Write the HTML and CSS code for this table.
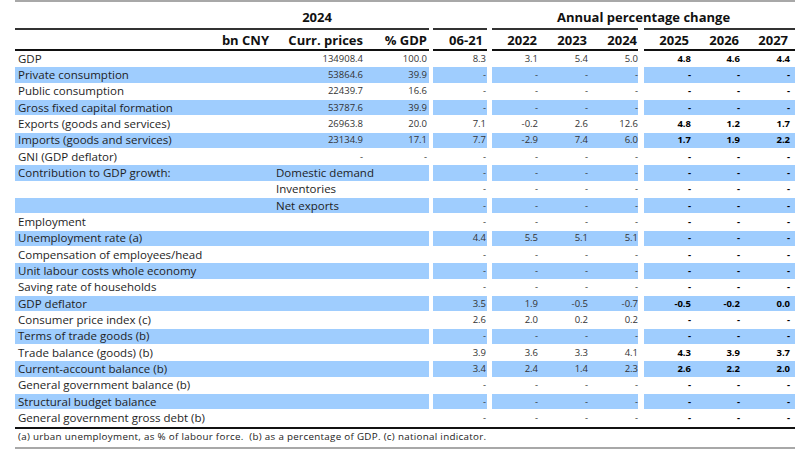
FILE: index.html
```html
<!DOCTYPE html>
<html lang="en">
<head>
<meta charset="utf-8">
<title>China – projections</title>
<link rel="stylesheet" href="styles.css">
</head>
<body>
<div class="frame">
<table class="t">
<colgroup>
<col class="w-lab"><col class="w-bn"><col class="w-cu"><col class="w-pg"><col class="w-g1"><col class="w-h"><col class="w-g2"><col class="w-y22"><col class="w-y23"><col class="w-y24"><col class="w-g3"><col class="w-y25"><col class="w-y26"><col class="w-y27">
</colgroup>
<thead>
<tr class="h1">
<th></th><th colspan="3" class="ctr">2024</th><th></th><th></th><th></th><th colspan="7" class="ctr">Annual percentage change</th>
</tr>
<tr class="rule r1">
<td colspan="4" class="k"></td><td></td><td class="k"></td><td></td><td colspan="3" class="k"></td><td></td><td colspan="3" class="k"></td>
</tr>
<tr class="h2">
<th></th><th class="hbn">bn CNY</th><th class="cu">Curr. prices</th><th class="pg">% GDP</th><th></th><th class="hh">06-21</th><th></th><th class="y22">2022</th><th class="y23">2023</th><th class="y24">2024</th><th></th><th class="y25">2025</th><th class="y26">2026</th><th class="y27">2027</th>
</tr>
<tr class="rule r2">
<td colspan="4" class="k"></td><td></td><td class="k"></td><td></td><td colspan="3" class="k"></td><td></td><td colspan="3" class="k"></td>
</tr>
</thead>
<tbody>
<tr><td colspan="2" class="lab">GDP</td><td class="cu">134908.4</td><td class="pg">100.0</td><td class="g"></td><td class="hh">8.3</td><td class="g"></td><td class="y22">3.1</td><td class="y23">5.4</td><td class="y24">5.0</td><td class="g"></td><td class="y25">4.8</td><td class="y26">4.6</td><td class="y27">4.4</td></tr>
<tr class="b"><td colspan="2" class="lab">Private consumption</td><td class="cu">53864.6</td><td class="pg">39.9</td><td class="g"></td><td class="hh">-</td><td class="g"></td><td class="y22">-</td><td class="y23">-</td><td class="y24">-</td><td class="g"></td><td class="y25">-</td><td class="y26">-</td><td class="y27">-</td></tr>
<tr><td colspan="2" class="lab">Public consumption</td><td class="cu">22439.7</td><td class="pg">16.6</td><td class="g"></td><td class="hh">-</td><td class="g"></td><td class="y22">-</td><td class="y23">-</td><td class="y24">-</td><td class="g"></td><td class="y25">-</td><td class="y26">-</td><td class="y27">-</td></tr>
<tr class="b"><td colspan="2" class="lab">Gross fixed capital formation</td><td class="cu">53787.6</td><td class="pg">39.9</td><td class="g"></td><td class="hh">-</td><td class="g"></td><td class="y22">-</td><td class="y23">-</td><td class="y24">-</td><td class="g"></td><td class="y25">-</td><td class="y26">-</td><td class="y27">-</td></tr>
<tr><td colspan="2" class="lab">Exports (goods and services)</td><td class="cu">26963.8</td><td class="pg">20.0</td><td class="g"></td><td class="hh">7.1</td><td class="g"></td><td class="y22">-0.2</td><td class="y23">2.6</td><td class="y24">12.6</td><td class="g"></td><td class="y25">4.8</td><td class="y26">1.2</td><td class="y27">1.7</td></tr>
<tr class="b"><td colspan="2" class="lab">Imports (goods and services)</td><td class="cu">23134.9</td><td class="pg">17.1</td><td class="g"></td><td class="hh">7.7</td><td class="g"></td><td class="y22">-2.9</td><td class="y23">7.4</td><td class="y24">6.0</td><td class="g"></td><td class="y25">1.7</td><td class="y26">1.9</td><td class="y27">2.2</td></tr>
<tr><td colspan="2" class="lab">GNI (GDP deflator)</td><td class="cu">-</td><td class="pg">-</td><td class="g"></td><td class="hh">-</td><td class="g"></td><td class="y22">-</td><td class="y23">-</td><td class="y24">-</td><td class="g"></td><td class="y25">-</td><td class="y26">-</td><td class="y27">-</td></tr>
<tr class="b"><td colspan="2" class="lab">Contribution to GDP growth:</td><td colspan="2" class="sub">Domestic demand</td><td class="g"></td><td class="hh">-</td><td class="g"></td><td class="y22">-</td><td class="y23">-</td><td class="y24">-</td><td class="g"></td><td class="y25">-</td><td class="y26">-</td><td class="y27">-</td></tr>
<tr><td colspan="2" class="lab"></td><td colspan="2" class="sub">Inventories</td><td class="g"></td><td class="hh">-</td><td class="g"></td><td class="y22">-</td><td class="y23">-</td><td class="y24">-</td><td class="g"></td><td class="y25">-</td><td class="y26">-</td><td class="y27">-</td></tr>
<tr class="b"><td colspan="2" class="lab"></td><td colspan="2" class="sub">Net exports</td><td class="g"></td><td class="hh">-</td><td class="g"></td><td class="y22">-</td><td class="y23">-</td><td class="y24">-</td><td class="g"></td><td class="y25">-</td><td class="y26">-</td><td class="y27">-</td></tr>
<tr><td colspan="2" class="lab">Employment</td><td class="cu"></td><td class="pg"></td><td class="g"></td><td class="hh">-</td><td class="g"></td><td class="y22">-</td><td class="y23">-</td><td class="y24">-</td><td class="g"></td><td class="y25">-</td><td class="y26">-</td><td class="y27">-</td></tr>
<tr class="b"><td colspan="2" class="lab">Unemployment rate (a)</td><td class="cu"></td><td class="pg"></td><td class="g"></td><td class="hh">4.4</td><td class="g"></td><td class="y22">5.5</td><td class="y23">5.1</td><td class="y24">5.1</td><td class="g"></td><td class="y25">-</td><td class="y26">-</td><td class="y27">-</td></tr>
<tr><td colspan="2" class="lab">Compensation of employees/head</td><td class="cu"></td><td class="pg"></td><td class="g"></td><td class="hh">-</td><td class="g"></td><td class="y22">-</td><td class="y23">-</td><td class="y24">-</td><td class="g"></td><td class="y25">-</td><td class="y26">-</td><td class="y27">-</td></tr>
<tr class="b"><td colspan="2" class="lab">Unit labour costs whole economy</td><td class="cu"></td><td class="pg"></td><td class="g"></td><td class="hh">-</td><td class="g"></td><td class="y22">-</td><td class="y23">-</td><td class="y24">-</td><td class="g"></td><td class="y25">-</td><td class="y26">-</td><td class="y27">-</td></tr>
<tr><td colspan="2" class="lab">Saving rate of households</td><td class="cu"></td><td class="pg"></td><td class="g"></td><td class="hh">-</td><td class="g"></td><td class="y22">-</td><td class="y23">-</td><td class="y24">-</td><td class="g"></td><td class="y25">-</td><td class="y26">-</td><td class="y27">-</td></tr>
<tr class="b"><td colspan="2" class="lab">GDP deflator</td><td class="cu"></td><td class="pg"></td><td class="g"></td><td class="hh">3.5</td><td class="g"></td><td class="y22">1.9</td><td class="y23">-0.5</td><td class="y24">-0.7</td><td class="g"></td><td class="y25">-0.5</td><td class="y26">-0.2</td><td class="y27">0.0</td></tr>
<tr><td colspan="2" class="lab">Consumer price index (c)</td><td class="cu"></td><td class="pg"></td><td class="g"></td><td class="hh">2.6</td><td class="g"></td><td class="y22">2.0</td><td class="y23">0.2</td><td class="y24">0.2</td><td class="g"></td><td class="y25">-</td><td class="y26">-</td><td class="y27">-</td></tr>
<tr class="b"><td colspan="2" class="lab">Terms of trade goods (b)</td><td class="cu"></td><td class="pg"></td><td class="g"></td><td class="hh">-</td><td class="g"></td><td class="y22">-</td><td class="y23">-</td><td class="y24">-</td><td class="g"></td><td class="y25">-</td><td class="y26">-</td><td class="y27">-</td></tr>
<tr><td colspan="2" class="lab">Trade balance (goods) (b)</td><td class="cu"></td><td class="pg"></td><td class="g"></td><td class="hh">3.9</td><td class="g"></td><td class="y22">3.6</td><td class="y23">3.3</td><td class="y24">4.1</td><td class="g"></td><td class="y25">4.3</td><td class="y26">3.9</td><td class="y27">3.7</td></tr>
<tr class="b"><td colspan="2" class="lab">Current-account balance (b)</td><td class="cu"></td><td class="pg"></td><td class="g"></td><td class="hh">3.4</td><td class="g"></td><td class="y22">2.4</td><td class="y23">1.4</td><td class="y24">2.3</td><td class="g"></td><td class="y25">2.6</td><td class="y26">2.2</td><td class="y27">2.0</td></tr>
<tr><td colspan="2" class="lab">General government balance (b)</td><td class="cu"></td><td class="pg"></td><td class="g"></td><td class="hh">-</td><td class="g"></td><td class="y22">-</td><td class="y23">-</td><td class="y24">-</td><td class="g"></td><td class="y25">-</td><td class="y26">-</td><td class="y27">-</td></tr>
<tr class="b"><td colspan="2" class="lab">Structural budget balance</td><td class="cu"></td><td class="pg"></td><td class="g"></td><td class="hh">-</td><td class="g"></td><td class="y22">-</td><td class="y23">-</td><td class="y24">-</td><td class="g"></td><td class="y25">-</td><td class="y26">-</td><td class="y27">-</td></tr>
<tr><td colspan="2" class="lab">General government gross debt (b)</td><td class="cu"></td><td class="pg"></td><td class="g"></td><td class="hh">-</td><td class="g"></td><td class="y22">-</td><td class="y23">-</td><td class="y24">-</td><td class="g"></td><td class="y25">-</td><td class="y26">-</td><td class="y27">-</td></tr>
</tbody>
</table>
<p class="note">(a) urban unemployment, as % of labour force.&nbsp; (b) as a percentage of GDP. (c) national indicator.</p>
</div>
</body>
</html>
```
FILE: styles.css
```css
html, body { margin: 0; padding: 0; background: #fff; }
body { font-family: "Open Sans", "DejaVu Sans", sans-serif; color: #222; }

.frame {
  margin: 0 5px 0 15px;
  width: 780px;
  border-top: 2px solid #a8a8a8;
}

.t {
  width: 780px;
  table-layout: fixed;
  border-collapse: separate;
  border-spacing: 0;
}

.w-lab { width: 190px; }
.w-bn  { width: 68px; }
.w-cu  { width: 93px; }
.w-pg  { width: 63px; }
.w-g1  { width: 4px; }
.w-h   { width: 54px; }
.w-g2  { width: 5px; }
.w-y22 { width: 48px; }
.w-y23 { width: 50px; }
.w-y24 { width: 48px; }
.w-g3  { width: 6px; }
.w-y25 { width: 49px; }
.w-y26 { width: 49px; }
.w-y27 { width: 53px; }

.t th, .t td {
  padding: 0;
  white-space: nowrap;
  overflow: visible;
}

/* header rows */
.h1 th {
  height: 26px;
  font-size: 13px;
  font-weight: 700;
  color: #111;
  line-height: 16px;
  vertical-align: middle;
  padding-top: 4px;
  box-sizing: border-box;
}
.h1 th.ctr { text-align: center; }

.h2 th {
  height: 19px;
  font-size: 13px;
  font-weight: 700;
  color: #111;
  line-height: 16px;
  text-align: right;
  vertical-align: middle;
}

.rule td { height: 2px; line-height: 0; font-size: 0; }
.r1 td.k { background: #333; }
.r2 td.k { background: #111; }

/* body rows */
.t tbody td {
  height: 16.33px;
  line-height: 14px;
  font-size: 9.5px;
  color: #333;
  text-align: right;
  vertical-align: middle;
  border-bottom: 1px solid #fff;
  box-sizing: border-box;
}
.t tbody td.lab, .t tbody td.sub {
  font-size: 11.5px;
  color: #1e1e1e;
  text-align: left;
  padding-left: 3px;
}

.t tbody tr.b td { background: #9fcdfe; }
.t tbody tr.b td.g { background: #fff; }

.t tbody td.y25, .t tbody td.y26, .t tbody td.y27 { font-weight: 700; color: #000; }

/* right paddings per column */
.hbn { padding-right: 4px !important; }
td.cu { padding-right: 3px !important; }
th.cu { padding-right: 3px !important; }
.pg { padding-right: 2px !important; }
td.hh { padding-right: 1px !important; }
th.hh { padding-right: 4px !important; }
td.y22, td.y23 { padding-right: 2px !important; }
th.y22, th.y23 { padding-right: 3px !important; }
td.y24 { padding-right: 0 !important; }
th.y24 { padding-right: 1px !important; }
td.y25, td.y26 { padding-right: 2px !important; }
th.y25 { padding-right: 4px !important; }
th.y26 { padding-right: 3px !important; }
td.y27 { padding-right: 5px !important; }
th.y27 { padding-right: 7px !important; }

.note {
  margin: 0;
  border-top: 2px solid #111;
  border-bottom: 2px solid #a8a8a8;
  font-size: 9.8px;
  letter-spacing: 0.3px;
  line-height: 13px;
  padding: 1px 0 4px 3px;
  color: #222;
  white-space: nowrap;
}
```
